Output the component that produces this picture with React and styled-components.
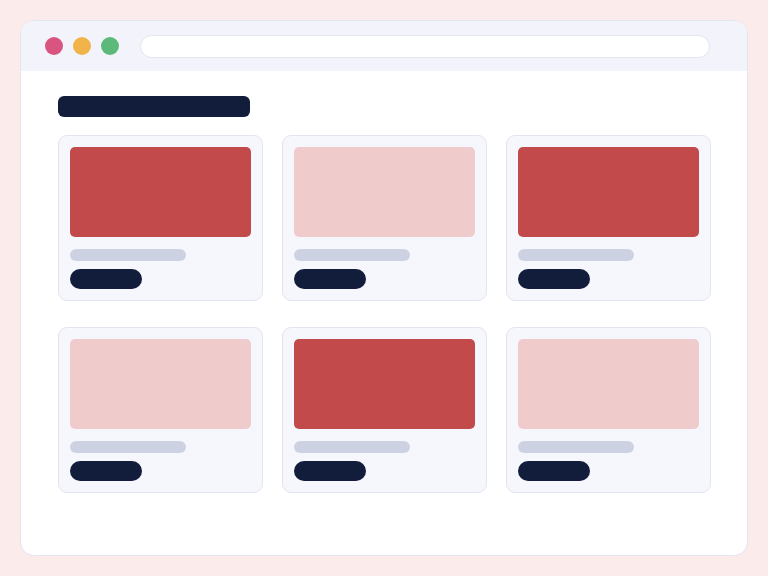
import React from 'react';
import styled, { createGlobalStyle } from 'styled-components';

const GlobalStyle = createGlobalStyle`
  html, body {
    margin: 0;
    padding: 0;
    background: #fbeceb;
    font-family: "Inter", "Liberation Sans", sans-serif;
  }
`;

const Page = styled.div`
  width: 768px;
  height: 576px;
  box-sizing: border-box;
  padding: 20px;
`;

const Window = styled.div`
  height: 536px;
  box-sizing: border-box;
  background: #ffffff;
  border: 1px solid #e3e5ef;
  border-radius: 14px;
  overflow: hidden;
  display: flex;
  flex-direction: column;
`;

const TitleBar = styled.div`
  height: 50px;
  flex-shrink: 0;
  background: #f3f4fb;
  display: flex;
  align-items: center;
  padding: 0 37px 0 24px;
  gap: 10px;
`;

const Dot = styled.span`
  width: 18px;
  height: 18px;
  border-radius: 50%;
  background: ${({ color }) => color};
  flex-shrink: 0;
`;

const UrlBar = styled.div`
  flex: 1;
  height: 23px;
  margin-left: 11px;
  box-sizing: border-box;
  background: #ffffff;
  border: 1px solid #e2e4ee;
  border-radius: 12px;
`;

const Content = styled.div`
  padding: 25px 36px 0 37px;
`;

const Heading = styled.div`
  width: 192px;
  height: 21px;
  border-radius: 6px;
  background: #111d3b;
`;

const Grid = styled.div`
  margin-top: 18px;
  display: grid;
  grid-template-columns: repeat(3, 205px);
  column-gap: 19px;
  row-gap: 26px;
`;

const Card = styled.div`
  height: 166px;
  box-sizing: border-box;
  background: #f6f7fc;
  border: 1px solid #e2e5f0;
  border-radius: 9px;
  padding: 11px;
  display: flex;
  flex-direction: column;
`;

const Thumb = styled.div`
  height: 91px;
  border-radius: 5px;
  background: ${({ hot }) => (hot ? '#c24a4a' : '#f0cbcc')};
`;

const Caption = styled.div`
  margin-top: 12px;
  width: 116px;
  height: 12px;
  border-radius: 6px;
  background: #cdd2e3;
`;

const Pill = styled.div`
  margin-top: 8px;
  width: 72px;
  height: 20px;
  border-radius: 10px;
  background: #111d3b;
`;

const cards = [true, false, true, false, true, false];

export default function App() {
  return (
    <Page>
      <GlobalStyle />
      <Window>
        <TitleBar>
          <Dot color="#d9547f" />
          <Dot color="#f0b44b" />
          <Dot color="#5cb97a" />
          <UrlBar />
        </TitleBar>
        <Content>
          <Heading />
          <Grid>
            {cards.map((hot, i) => (
              <Card key={i}>
                <Thumb hot={hot} />
                <Caption />
                <Pill />
              </Card>
            ))}
          </Grid>
        </Content>
      </Window>
    </Page>
  );
}
